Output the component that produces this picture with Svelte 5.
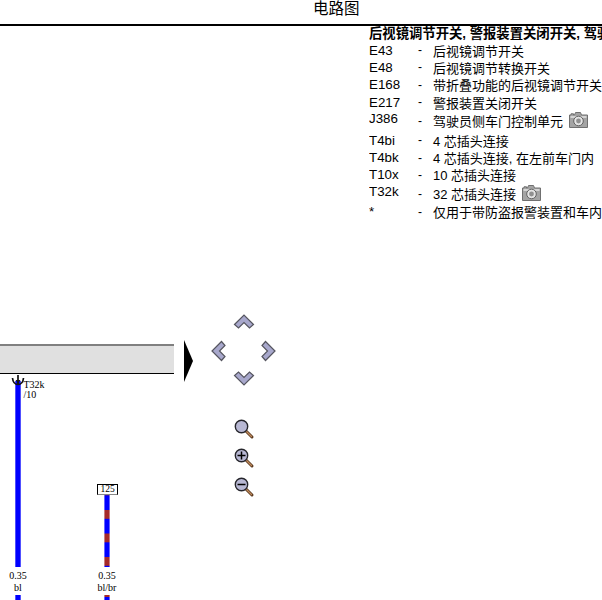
<script>
	const legend = [
		{ code: 'E43', text: '后视镜调节开关' },
		{ code: 'E48', text: '后视镜调节转换开关' },
		{ code: 'E168', text: '带折叠功能的后视镜调节开关' },
		{ code: 'E217', text: '警报装置关闭开关' },
		{ code: 'J386', text: '驾驶员侧车门控制单元', photo: true },
		{ code: 'T4bi', text: '4 芯插头连接' },
		{ code: 'T4bk', text: '4 芯插头连接, 在左前车门内' },
		{ code: 'T10x', text: '10 芯插头连接' },
		{ code: 'T32k', text: '32 芯插头连接', photo: true },
		{ code: '*', text: '仅用于带防盗报警装置和车内' }
	];

	// chevrons of the pan pad, centred in their own 24x24 box
	const arrows = [
		{ name: 'up', x: 231.5, y: 309, rot: 0 },
		{ name: 'left', x: 206, y: 338.5, rot: -90 },
		{ name: 'right', x: 257, y: 338.5, rot: 90 },
		{ name: 'down', x: 231.5, y: 367, rot: 180 }
	];

	const zooms = [
		{ y: 419, mark: '' },
		{ y: 448, mark: 'plus' },
		{ y: 477, mark: 'minus' }
	];
</script>

<div class="page">
	<header class="title">电路图</header>

	<div class="content">
		<div class="canvas">
			<div class="bar"></div>
			<svg class="pointer" width="12" height="42" viewBox="0 0 12 42">
				<path d="M1 0 L10 21 L1 42 Z" fill="#000" />
			</svg>

			{#each arrows as a}
				<svg class="arrow" style="left: {a.x}px; top: {a.y - 26}px" width="24" height="24" viewBox="0 0 24 24">
					<g transform="rotate({a.rot} 12 12)">
						<path d="M2.5 15.5 L12 6 L21.5 15.5 L17.5 19 L12 13.5 L6.5 19 Z" fill="#a8a8cc" stroke="#55555f" stroke-width="1.2" />
					</g>
				</svg>
			{/each}

			{#each zooms as z}
				<svg class="zoom" style="top: {z.y - 26}px" width="22" height="22" viewBox="0 0 22 22">
					<path d="M11.5 11.5 L18 18" stroke="#5b3a20" stroke-width="3" stroke-linecap="round" />
					<path d="M12 12 L17.5 17.5" stroke="#c08a5c" stroke-width="1.2" stroke-linecap="round" />
					<circle cx="7.5" cy="7.5" r="6.2" fill="#b8b8d4" stroke="#26262c" stroke-width="1.4" />
					{#if z.mark}
						<path d="M3.5 7.5 H11.5" stroke="#000" stroke-width="1.5" />
					{/if}
					{#if z.mark === 'plus'}
						<path d="M7.5 3.5 V11.5" stroke="#000" stroke-width="1.5" />
					{/if}
				</svg>
			{/each}

			<div class="wire blue one"></div>
			<div class="wire blue one-tail"></div>
			<div class="wire striped two"></div>
			<div class="wire striped two-tail"></div>

			<svg class="ground" width="14" height="11" viewBox="0 0 14 11">
				<path d="M7 0 V9 M1.5 3 C2 8 5 9.5 7 9.5 C9 9.5 12 8 12.5 3" fill="none" stroke="#111" stroke-width="1.7" />
				<path d="M4.5 5 L7 8 L9.5 5 Z" fill="#111" />
			</svg>
			<div class="pin">T32k<br />/10</div>

			<div class="tag">125</div>

			<div class="wire-label first">0.35<br /><b>bl</b></div>
			<div class="wire-label second">0.35<br /><b>bl/br</b></div>
		</div>

		<section class="legend">
			<h2>后视镜调节开关, 警报装置关闭开关, 驾驶</h2>
			{#each legend as row}
				<div class="row" class:with-photo={row.photo}>
					<span class="code">{row.code}</span>
					<span class="dash">-</span>
					<span class="text">{row.text}</span>
					{#if row.photo}
						<svg class="camera" width="19" height="16" viewBox="0 0 19 16">
							<path d="M6.5 0.5 H11.5 L12.5 3 H18.5 V15.5 H0.5 V3 H2 V1.8 H4.5 V3 H5.5 Z" fill="#a4a4a4" stroke="#707070" />
							<rect x="1.5" y="4" width="16" height="2" fill="#d4d4d4" />
							<circle cx="9.5" cy="9" r="4.8" fill="#e4e4e4" stroke="#606060" />
							<circle cx="9.5" cy="9" r="2.4" fill="#909090" />
						</svg>
					{/if}
				</div>
			{/each}
		</section>
	</div>
</div>

<style>
	:global(body) {
		background: #fff;
	}

	.page {
		width: 602px;
		height: 600px;
		overflow: hidden;
		font-family: 'Liberation Sans', 'Noto Sans CJK SC', sans-serif;
		color: #000;
	}

	.title {
		height: 24px;
		box-sizing: content-box;
		border-bottom: 2px solid #000;
		padding-left: 313px;
		font-size: 15.5px;
		line-height: 17px;
		white-space: nowrap;
	}

	.content {
		display: flex;
		height: 574px;
	}

	.canvas {
		position: relative;
		flex: 0 0 369px;
	}

	.bar {
		position: absolute;
		left: 0;
		top: 318px;
		width: 174px;
		height: 27px;
		background: #e0e0e0;
		border-top: 2px solid #808080;
		border-bottom: 1px solid #000;
	}

	.pointer {
		position: absolute;
		left: 183px;
		top: 314px;
	}

	.arrow,
	.zoom,
	.ground,
	.camera {
		display: block;
	}

	.arrow {
		position: absolute;
	}

	.zoom {
		position: absolute;
		left: 234px;
	}

	.ground {
		position: absolute;
		left: 11px;
		top: 349px;
	}

	.pin {
		position: absolute;
		left: 23.5px;
		top: 354px;
		font: 10px/9.5px 'Liberation Serif', serif;
	}

	.wire {
		position: absolute;
		width: 6px;
		box-sizing: border-box;
	}

	.blue {
		background: #0000ff;
		border: solid #5050ff;
		border-width: 0 1px;
	}

	.striped {
		background:
			linear-gradient(90deg, #fff6 0 1px, transparent 1px 5px, #fff6 5px),
			linear-gradient(#a52a2a 0 9px, #0000ff 9px) 0 16px / 100% 23.5px;
	}

	.one {
		left: 15px;
		top: 355px;
		height: 186px;
	}

	.one-tail {
		left: 15px;
		top: 569px;
		height: 5px;
	}

	.two {
		left: 104px;
		top: 468px;
		height: 73px;
	}

	.two-tail {
		left: 104px;
		top: 569px;
		height: 5px;
	}

	.tag {
		position: absolute;
		left: 97px;
		top: 458px;
		width: 19px;
		height: 9px;
		border: 1px solid #000;
		border-bottom-color: #888;
		background: #fff;
		font: 9.5px/9px 'Liberation Serif', serif;
		text-align: center;
	}

	.wire-label {
		position: absolute;
		top: 544px;
		width: 40px;
		text-align: center;
		font: 10px/12px 'Liberation Serif', serif;
	}

	.wire-label b {
		font-weight: normal;
	}

	.first {
		left: -2px;
	}

	.second {
		left: 87px;
	}

	.legend {
		flex: 0 0 233px;
		min-width: 0;
		overflow: hidden;
		font-size: 13px;
	}

	h2 {
		margin: 0;
		font-size: 13.33px;
		line-height: 15.5px;
		font-weight: bold;
		white-space: nowrap;
	}

	.row {
		display: flex;
		align-items: center;
		height: 17.3px;
		white-space: nowrap;
	}

	.row.with-photo {
		height: 21px;
	}

	.row:last-child {
		margin-top: -1.5px;
	}

	.with-photo .code {
		align-self: flex-start;
	}

	.with-photo .text {
		margin-top: -1px;
	}

	.with-photo .camera {
		margin-top: -3px;
		margin-left: 6px;
	}

	.code {
		flex: 0 0 49px;
		font-size: 13.33px;
	}

	.dash {
		flex: 0 0 15px;
		font-size: 12px;
	}

	.camera {
		margin-left: 5px;
	}
</style>
